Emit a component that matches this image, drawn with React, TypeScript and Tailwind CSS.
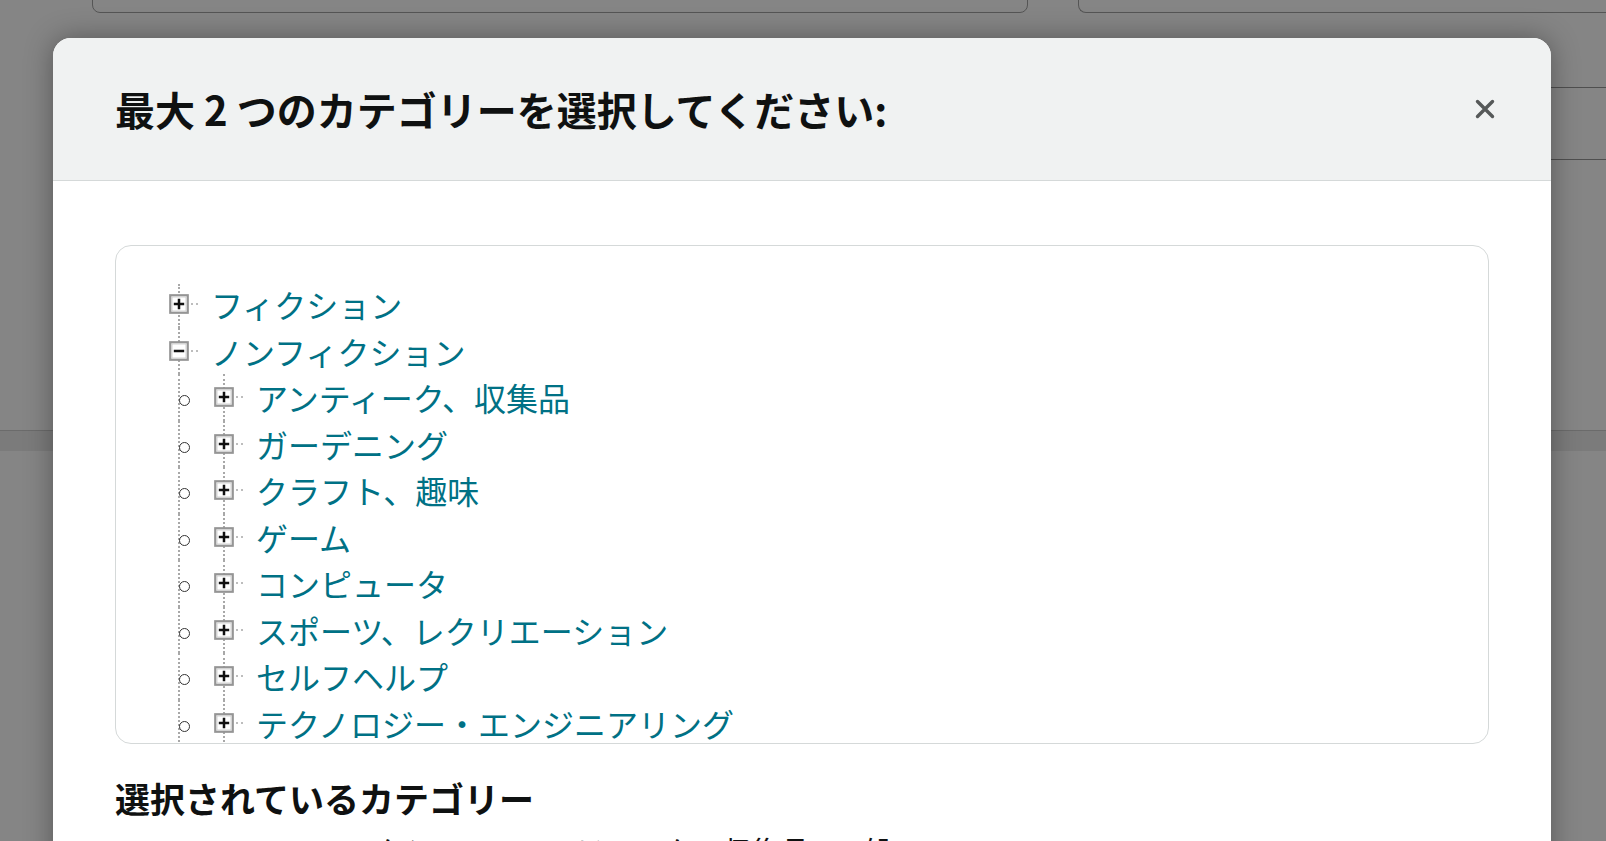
import React from "react";

const FONT = '"Noto Sans CJK JP", "Noto Sans", sans-serif';

function Box({ minus }: { minus?: boolean }) {
  return (
    <svg width="20" height="20" viewBox="0 0 20 20" className="relative z-10 block">
      <rect x="1.25" y="1.25" width="17.5" height="17.5" fill="#fff" stroke="#959595" strokeWidth="2.2" />
      <rect x="3" y="3" width="14" height="14" fill="none" stroke="#c9c9c9" strokeWidth="0.8" />
      <path d="M4.8 10h10.4" stroke="#111" strokeWidth="2.5" />
      {!minus && <path d="M10 4.8v10.4" stroke="#111" strokeWidth="2.5" />}
    </svg>
  );
}

function Stub() {
  return <div className="ml-[2px] w-[7px] border-t-2 border-dotted border-[#bdbdbd]" />;
}

function RootRow({ label, minus, first }: { label: string; minus?: boolean; first?: boolean }) {
  return (
    <div className="flex h-[46.5px] items-center">
      <div className="relative flex h-full w-[20px] items-center justify-center">
        <div
          className={
            first
              ? "absolute bottom-0 left-[9px] top-[3px] border-l-2 border-dotted border-[#a8a8a8]"
              : "absolute bottom-0 left-[9px] top-0 border-l-2 border-dotted border-[#a8a8a8]"
          }
        />
        <Box minus={minus} />
      </div>
      <Stub />
      <span className="ml-[13px] text-[32px] leading-none text-[#007185]">{label}</span>
    </div>
  );
}

function ChildRow({ label }: { label: string }) {
  return (
    <div className="flex h-[46.5px] items-center">
      <div className="relative h-full w-[20px]">
        <div className="absolute bottom-0 left-[9px] top-0 border-l-2 border-dotted border-[#a8a8a8]" />
        <div className="absolute left-[10px] top-[calc(50%-2px)] h-[11px] w-[11px] rounded-full border-[1.5px] border-[#333] bg-white" />
      </div>
      <div className="relative ml-[25px] flex h-full w-[20px] items-center justify-center">
        <div className="absolute bottom-0 left-[9px] top-0 border-l-2 border-dotted border-[#a8a8a8]" />
        <Box />
      </div>
      <Stub />
      <span className="ml-[13px] text-[32px] leading-none text-[#007185]">{label}</span>
    </div>
  );
}

const children = [
  "アンティーク、収集品",
  "ガーデニング",
  "クラフト、趣味",
  "ゲーム",
  "コンピュータ",
  "スポーツ、レクリエーション",
  "セルフヘルプ",
  "テクノロジー・エンジニアリング",
];

export default function App() {
  return (
    <div className="relative h-[841px] w-full overflow-hidden bg-[#858585]" style={{ fontFamily: FONT }}>
      {/* page behind overlay */}
      <div className="flex">
        <div className="ml-[92px] mt-[-28px] h-[41px] w-[936px] rounded-[8px] border border-[#555]" />
        <div className="ml-[50px] mt-[-28px] h-[41px] flex-1 rounded-bl-[8px] border border-r-0 border-[#555]" />
      </div>
      <div className="ml-[1500px] mt-[74px] border-t border-[#4f4f4f]" />
      <div className="ml-[1500px] mt-[71px] border-t border-[#4f4f4f]" />
      <div className="mt-[270px] h-[21px] border-t border-[#6b6b6b] bg-[#7b7b7b]" />

      {/* modal */}
      <div className="absolute left-[53px] top-[38px] w-[1498px] rounded-t-[18px] bg-white shadow-[0_0_28px_rgba(0,0,0,0.35)]">
        <div className="flex h-[143px] items-center justify-between rounded-t-[18px] border-b border-[#d5d9d9] bg-[#f0f2f2] pl-[62px] pr-[56px]">
          <h1 className="text-[40px] font-bold leading-none text-[#0f1111]">最大 2 つのカテゴリーを選択してください:</h1>
          <svg width="20" height="20" viewBox="0 0 20 20" className="block">
            <path d="M2.5 2.5l15 15M17.5 2.5l-15 15" stroke="#565959" strokeWidth="3.4" strokeLinecap="round" />
          </svg>
        </div>
        <div className="px-[62px] pt-[64px]">
          <div className="h-[499px] overflow-hidden rounded-[16px] border border-[#d5d9d9] pl-[53px] pt-[35px]">
            <RootRow label="フィクション" first />
            <RootRow label="ノンフィクション" minus />
            {children.map((c) => (
              <ChildRow key={c} label={c} />
            ))}
          </div>
          <h2 className="mt-[32px] text-[35px] font-bold leading-[44px] text-[#0f1111]">選択されているカテゴリー</h2>
          <p className="ml-[140px] mt-[12px] text-[30px] leading-[36px] text-[#0f1111]">
            ノンフィクション › アンティーク、収集品 › 一般
          </p>
          <div className="h-[40px]" />
        </div>
      </div>
    </div>
  );
}
